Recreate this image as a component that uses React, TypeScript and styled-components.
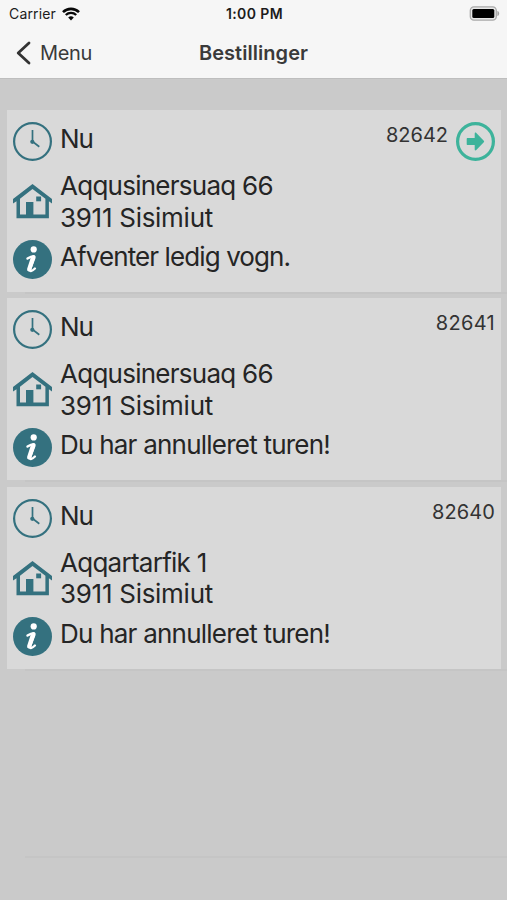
import React from "react";
import styled, { createGlobalStyle } from "styled-components";

const GlobalStyle = createGlobalStyle`
  * { box-sizing: border-box; }
  body { margin: 0; background: #cacaca; }
`;

const Screen = styled.div`
  width: 507px;
  height: 900px;
  overflow: hidden;
  background: #cacaca;
  color: #252525;
  font-family: Inter, "Liberation Sans", sans-serif;
  display: flex;
  flex-direction: column;
`;

const Header = styled.header`
  height: 79px;
  flex: none;
  background: #f6f6f6;
  border-bottom: 1px solid #bebebe;
`;

const StatusBar = styled.div`
  height: 27px;
  padding: 0 7px 0 9px;
  display: grid;
  grid-template-columns: 1fr auto 1fr;
  align-items: center;
  font-size: 14px;
  color: #1c1c1c;
`;

const Carrier = styled.div`
  display: flex;
  align-items: center;
  gap: 6px;
  letter-spacing: 0.15px;
`;

const Clock = styled.div`
  font-weight: 600;
  letter-spacing: 0.4px;
`;

const Battery = styled.div`
  display: flex;
  justify-content: flex-end;
`;

const NavBar = styled.nav`
  height: 51px;
  padding: 0 16px;
  display: grid;
  grid-template-columns: 1fr auto 1fr;
  align-items: center;
  color: #3a3a3a;
`;

const Back = styled.a`
  display: flex;
  align-items: center;
  gap: 9px;
  font-size: 20px;
  letter-spacing: -0.35px;
`;

const Title = styled.h1`
  margin: 0;
  font-size: 20px;
  font-weight: 600;
  letter-spacing: 0.05px;
`;

const List = styled.main`
  padding-top: 31px;
  display: flex;
  flex-direction: column;
`;

const Row = styled.section`
  height: 188.3px;
  padding: 0 6px 0 7px;
`;

const Card = styled.article`
  height: 182px;
  padding: 12px 6px 0;
  background: #d9d9d9;
`;

const Divider = styled.hr<{ $gap?: number }>`
  height: 2px;
  border: 0;
  margin: ${(p) => p.$gap ?? 0}px -6px 0 18px;
  background: #c5c5c5;
`;

const Line = styled.div<{ $height: number }>`
  height: ${(p) => p.$height}px;
  display: flex;
  align-items: flex-start;
  gap: 8px;
`;

const IconSlot = styled.span<{ $top?: number }>`
  width: 39px;
  flex: none;
  padding-top: ${(p) => p.$top ?? 0}px;
  svg { display: block; }
`;

const Text = styled.p<{ $spacing: number; $top?: number }>`
  margin: 0;
  padding-top: ${(p) => p.$top ?? 0}px;
  flex: 1;
  font-size: 26px;
  line-height: 31.5px;
  letter-spacing: ${(p) => p.$spacing}px;
  white-space: nowrap;
`;

const Street = styled.span<{ $spacing: number }>`
  display: block;
  letter-spacing: ${(p) => p.$spacing}px;
`;

const OrderNumber = styled.span<{ $spacing: number }>`
  padding-top: 1px;
  font-size: 20px;
  line-height: 25px;
  letter-spacing: ${(p) => p.$spacing}px;
  color: #333;
`;

const Wifi = () => (
  <svg width="18" height="14" viewBox="0 0 18 14" fill="none" stroke="#080808">
    <path d="M1 5.1a11.5 11.5 0 0 1 16 0" strokeWidth="2.6" />
    <path d="M3.8 8a7.4 7.4 0 0 1 10.4 0" strokeWidth="2.3" />
    <path d="M9 13.4 6.2 10.6a4 4 0 0 1 5.6 0Z" fill="#080808" stroke="none" />
  </svg>
);

const BatteryIcon = () => (
  <svg width="31" height="15" viewBox="0 0 31 15">
    <rect x="1.3" y="0.9" width="26" height="13.2" rx="3.6" fill="#e8e8e8" stroke="#a9a9a9" strokeWidth="1.3" />
    <rect x="3.3" y="2.9" width="22" height="9.2" rx="1.5" fill="#000" />
    <path d="M28.4 5c2.4.6 2.4 4.4 0 5Z" fill="#a3a3a3" />
  </svg>
);

const Chevron = () => (
  <svg width="15" height="24" viewBox="0 0 15 24" fill="none" stroke="#333" strokeWidth="2.8" strokeLinecap="round" strokeLinejoin="round">
    <path d="M13 2 2.2 12 13 22" />
  </svg>
);

const ClockIcon = () => (
  <svg width="39" height="39" viewBox="0 0 39 39" fill="none" stroke="#34717f">
    <circle cx="19.5" cy="19.5" r="18.4" strokeWidth="2.2" />
    <path d="M19.5 8v11.5l6.8 5.2" strokeWidth="1.7" />
    <circle cx="19.3" cy="19.8" r="2.1" fill="#34717f" stroke="none" />
  </svg>
);

const HouseIcon = () => (
  <svg width="39" height="35" viewBox="0 0 39 35" fill="#34717f">
    <path d="M19.5 0 39 15v4.4l-3.1-2.1v17H3.5v-17L0 19.4V15ZM19.5 5.1 7 14.7v15.8h6V18h7.4v12.5h12V14.7Z" fillRule="evenodd" />
    <rect x="23.2" y="12.5" width="4.9" height="4.8" />
  </svg>
);

const InfoIcon = () => (
  <svg width="39" height="39" viewBox="0 0 39 39">
    <circle cx="19.5" cy="19.5" r="19.5" fill="#34717f" />
    <circle cx="20.7" cy="9.4" r="3.1" fill="#fff" />
    <path d="M14.5 18.6c2.3-1.5 4.4-2.4 6-2.4 1 0 1.1.8.8 1.9l-4.1 10.8c-.5 1.7 0 2.3 1.2 2 1.2-.3 2.3-1.2 3.5-2.4" fill="none" stroke="#fff" strokeWidth="2.4" strokeLinecap="round" strokeLinejoin="round" />
    <path d="m20 17.6-3.8 11.8" stroke="#fff" strokeWidth="4.3" strokeLinecap="round" />
  </svg>
);

const ArrowButton = styled.button`
  width: 39px;
  height: 39px;
  padding: 0;
  border: 0;
  background: none;
  svg { display: block; }
`;

const ArrowIcon = () => (
  <svg width="39" height="39" viewBox="0 0 39 39">
    <circle cx="19.5" cy="19.5" r="17.9" fill="none" stroke="#3db39b" strokeWidth="3.2" />
    <path d="M11.7 16h7v-4.3c0-1.2.8-1.4 1.6-.6l7.5 7.6c.5.5.5 1 0 1.5l-7.5 7.8c-.8.8-1.6.5-1.6-.6v-4.3h-7c-.7 0-1-.3-1-1V17c0-.7.3-1 1-1Z" fill="#3db39b" />
  </svg>
);

interface Order {
  number: string;
  street: string;
  message: string;
  numberSpacing: number;
  streetSpacing: number;
  messageSpacing: number;
  active?: boolean;
}

const orders: Order[] = [
  { number: "82642", street: "Aqqusinersuaq 66", message: "Afventer ledig vogn.", numberSpacing: 0, streetSpacing: -0.74, messageSpacing: -0.9, active: true },
  { number: "82641", street: "Aqqusinersuaq 66", message: "Du har annulleret turen!", numberSpacing: 0.3, streetSpacing: -0.74, messageSpacing: -0.77 },
  { number: "82640", street: "Aqqartarfik 1", message: "Du har annulleret turen!", numberSpacing: 0.1, streetSpacing: -0.73, messageSpacing: -0.77 },
];

export default function App() {
  return (
    <Screen>
      <GlobalStyle />
      <Header>
        <StatusBar>
          <Carrier>Carrier <Wifi /></Carrier>
          <Clock>1:00 PM</Clock>
          <Battery><BatteryIcon /></Battery>
        </StatusBar>
        <NavBar>
          <Back><Chevron />Menu</Back>
          <Title>Bestillinger</Title>
        </NavBar>
      </Header>
      <List>
        {orders.map((order) => (
          <Row key={order.number}>
            <Card>
              <Line $height={48}>
                <IconSlot><ClockIcon /></IconSlot>
                <Text $spacing={-1} $top={1}>Nu</Text>
                <OrderNumber $spacing={order.numberSpacing}>{order.number}</OrderNumber>
                {order.active && <ArrowButton aria-label="Vis"><ArrowIcon /></ArrowButton>}
              </Line>
              <Line $height={70}>
                <IconSlot $top={14}><HouseIcon /></IconSlot>
                <Text $spacing={-0.28}>
                  <Street $spacing={order.streetSpacing}>{order.street}</Street>
                  3911 Sisimiut
                </Text>
              </Line>
              <Line $height={39}>
                <IconSlot><InfoIcon /></IconSlot>
                <Text $spacing={order.messageSpacing} $top={1}>{order.message}</Text>
              </Line>
            </Card>
            <Divider />
          </Row>
        ))}
        <Row><Divider $gap={181} /></Row>
      </List>
    </Screen>
  );
}
